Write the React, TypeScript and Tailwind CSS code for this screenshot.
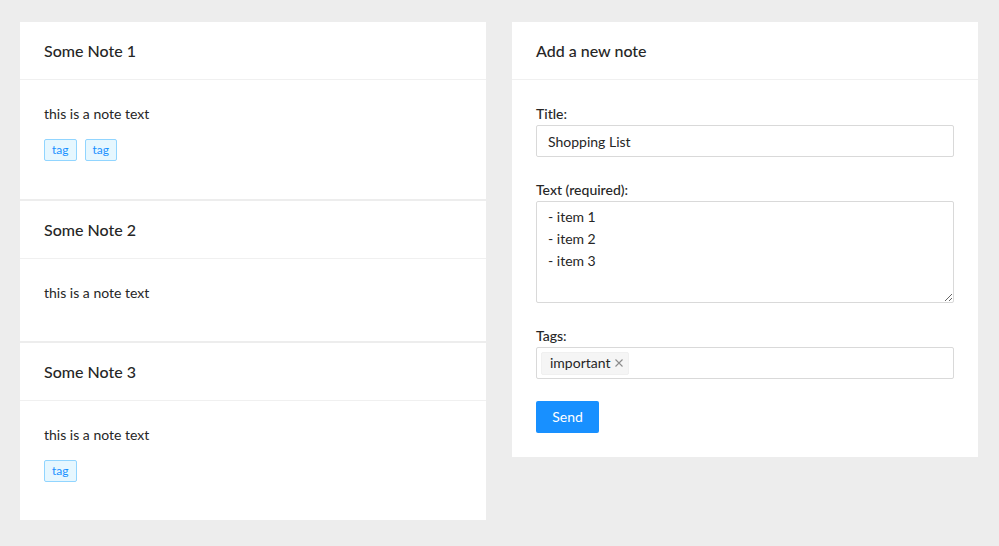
import React from 'react';

const FONT = "font-['Lato','Noto_Sans',sans-serif]";

const NOTES = [
  { title: 'Some Note 1', text: 'this is a note text', tags: ['tag', 'tag'] },
  { title: 'Some Note 2', text: 'this is a note text', tags: [] },
  { title: 'Some Note 3', text: 'this is a note text', tags: ['tag'] },
];

function NoteCard({ title, text, tags }: { title: string; text: string; tags: string[] }) {
  return (
    <div className="bg-white">
      <div className="h-[58px] px-6 flex items-center border-b border-[#f0f0f0]">
        <h2 className="text-base font-medium text-[#262626] leading-6">{title}</h2>
      </div>
      <div className="px-6 pt-[23px] pb-[23px]">
        <p className="text-sm leading-[22px] text-[#262626] mb-[14px]">{text}</p>
        {tags.length > 0 && (
          <div className="flex gap-2 mb-[15px]">
            {tags.map((t, i) => (
              <span
                key={i}
                className="h-[22px] px-[7px] flex items-center text-xs text-[#1890ff] bg-[#e6f7ff] border border-[#91d5ff] rounded-[2px]"
              >
                {t}
              </span>
            ))}
          </div>
        )}
      </div>
    </div>
  );
}

export default function App() {
  return (
    <div className={`${FONT} min-h-[546px] bg-[#ededed] px-5 pt-[22px] pb-[26px] flex gap-[26px] items-start`}>
      {/* Notes list */}
      <div className="w-[466px] flex flex-col gap-[2px]">
        {NOTES.map((n) => (
          <NoteCard key={n.title} {...n} />
        ))}
      </div>

      {/* New note form */}
      <div className="w-[466px] bg-white">
        <div className="h-[58px] px-6 flex items-center border-b border-[#f0f0f0]">
          <h2 className="text-base font-medium text-[#262626] leading-6">Add a new note</h2>
        </div>
        <div className="p-6 pt-[23px]">
          <label className="block text-sm font-medium leading-[22px] text-[#262626]">Title:</label>
          <input
            defaultValue="Shopping List"
            className="w-full h-8 px-[11px] text-sm text-[#262626] border border-[#d9d9d9] rounded-[2px] outline-none"
          />

          <label className="block mt-[22px] text-sm font-medium leading-[22px] text-[#262626]">Text (required):</label>
          <textarea
            defaultValue={'- item 1\n- item 2\n- item 3'}
            className="block w-full h-[102px] px-[11px] py-1 text-sm leading-[22px] text-[#262626] border border-[#d9d9d9] rounded-[2px] outline-none"
          />

          <label className="block mt-[22px] text-sm font-medium leading-[22px] text-[#262626]">Tags:</label>
          <div className="h-8 px-1 flex items-center border border-[#d9d9d9] rounded-[2px]">
            <span className="h-[23px] pl-2 pr-1 flex items-center gap-1 text-sm text-[#262626] bg-[#f5f5f5] border border-[#f0f0f0] rounded-[2px]">
              important
              <svg width="10" height="10" viewBox="0 0 10 10" className="text-[#8c8c8c]">
                <path d="M1.5 1.5l7 7M8.5 1.5l-7 7" stroke="currentColor" strokeWidth="1.1" />
              </svg>
            </span>
          </div>

          <button className="mt-[22px] h-8 w-[63px] text-sm text-white bg-[#1890ff] rounded-[2px]">Send</button>
        </div>
      </div>
    </div>
  );
}
